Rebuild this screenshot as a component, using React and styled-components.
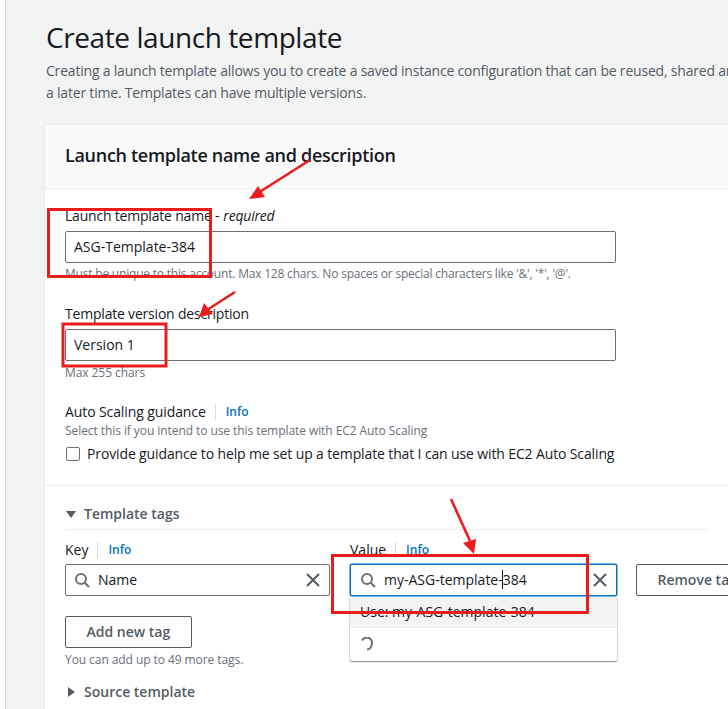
import styled, { createGlobalStyle } from "styled-components";

const GlobalStyle = createGlobalStyle`
  html, body {
    margin: 0;
    padding: 0;
    background: #fff;
    overflow: hidden;
  }
  body {
    font-family: "Open Sans", "Noto Sans", sans-serif;
    color: #16191f;
  }
`;

const Page = styled.div`
  position: relative;
  width: 728px;
  height: 709px;
  overflow: hidden;
  display: flex;
`;

const SideEdge = styled.div`
  flex: 0 0 5px;
  background: #fff;
  border-right: 1px solid #d5dbdb;
`;

const Main = styled.div`
  flex: 0 0 722px;
  background: #f2f3f3;
  padding: 0 0 0 38px;
  box-sizing: border-box;
  overflow: hidden;
`;

const Title = styled.h1`
  margin: 17px 0 0 2px;
  font-size: 28px;
  line-height: 40px;
  font-weight: 400;
  letter-spacing: -0.42px;
`;

const Desc = styled.p`
  margin: 3px 0 20px 2px;
  font-size: 14px;
  line-height: 22px;
  color: #545b64;
  white-space: nowrap;
  letter-spacing: -0.2px;
`;

const Panel = styled.div`
  background: #fff;
  border: 1px solid #eaeded;
  border-right: none;
  height: 640px;
`;

const PanelHead = styled.div`
  height: 64px;
  box-sizing: border-box;
  padding: 18px 20px 0;
  background: #fafafa;
  border-bottom: 1px solid #eaeded;
`;

const PanelTitle = styled.h2`
  margin: 0;
  font-size: 18px;
  line-height: 24px;
  font-weight: 600;
  letter-spacing: -0.3px;
`;

const Body = styled.div`
  padding: 17px 20px 0;
`;

const Field = styled.div`
  width: 551px;
  margin-bottom: ${(p) => p.$gap || 0}px;
`;

const Label = styled.div`
  font-size: 14px;
  line-height: 20px;
  margin-bottom: ${(p) => p.$gap ?? 5}px;
  display: flex;
  align-items: center;
  white-space: nowrap;
  letter-spacing: ${(p) => p.$track || 0}px;
  i {
    margin-left: 4px;
  }
`;

const InfoLink = styled.a`
  font-size: 12px;
  font-weight: 600;
  color: #0073bb;
  margin-left: 9px;
  padding-left: 10px;
  border-left: 1px solid #d5dbdb;
  line-height: 16px;
  letter-spacing: 0;
`;

const TextInput = styled.div`
  height: 32px;
  box-sizing: border-box;
  border: 1px solid #687078;
  border-radius: 2px;
  padding: 0 8px;
  font-size: 14px;
  line-height: 30px;
  background: #fff;
`;

const Hint = styled.div`
  font-size: 12px;
  line-height: 16px;
  color: #687078;
  margin-top: ${(p) => p.$top ?? 3}px;
  white-space: nowrap;
  letter-spacing: ${(p) => p.$track ?? -0.07}px;
`;

const CheckRow = styled.div`
  display: flex;
  align-items: center;
  margin-top: 4px;
  font-size: 14px;
  line-height: 22px;
  white-space: nowrap;
  letter-spacing: -0.13px;
`;

const CheckBox = styled.span`
  flex: 0 0 auto;
  width: 12px;
  height: 12px;
  border: 1px solid #687078;
  border-radius: 2px;
  margin: 0 7px 0 1px;
`;

const Divider = styled.div`
  height: 1px;
  background: #eaeded;
  margin: 20px -20px 0;
`;

const Section = styled.div`
  padding: 18px 20px 0;
`;

const SectionHead = styled.div`
  display: flex;
  align-items: center;
  font-size: 14px;
  line-height: 20px;
  font-weight: 600;
  color: #545b64;
  margin-top: ${(p) => p.$top || 0}px;
  svg {
    width: 12px;
    height: 12px;
    margin-right: 7px;
    fill: #545b64;
  }
`;

const SubLine = styled.div`
  height: 1px;
  background: #eaeded;
  margin: 5px 0 10px;
`;

const TagRow = styled.div`
  display: flex;
  align-items: flex-start;
`;

const TagCol = styled.div`
  flex: 0 0 ${(p) => p.$width}px;
  margin-right: ${(p) => p.$gap || 0}px;
`;

const ValueWrap = styled.div`
  position: relative;
`;

const SearchBox = styled.div`
  height: 32px;
  box-sizing: border-box;
  display: flex;
  align-items: center;
  border: 1px solid ${(p) => (p.$focus ? "#0073bb" : "#687078")};
  box-shadow: ${(p) => (p.$focus ? "0 0 0 0.5px #0073bb" : "none")};
  border-radius: 2px;
  padding: 0 8px 1px ${(p) => (p.$focus ? 9 : 8)}px;
  font-size: 14px;
  background: #fff;
  svg {
    flex: 0 0 auto;
  }
`;

const SearchText = styled.span`
  flex: 1;
  margin-left: 8px;
  position: relative;
`;

const Caret = styled.span`
  position: absolute;
  left: 118px;
  top: 0;
  width: 1px;
  height: 19px;
  background: #16191f;
`;

const Menu = styled.div`
  position: absolute;
  left: 0;
  right: 0;
  top: 33px;
  background: #fff;
  box-shadow: 0 1px 1px 0 rgba(0, 28, 36, 0.3), 1px 1px 1px 0 rgba(0, 28, 36, 0.15), -1px 1px 1px 0 rgba(0, 28, 36, 0.15);
  border-radius: 0 0 2px 2px;
`;

const MenuItem = styled.div`
  height: 31px;
  box-sizing: border-box;
  padding-left: 10px;
  font-size: 14px;
  line-height: 30px;
  background: #f2f3f3;
  border-bottom: 1px solid #eaeded;
`;

const MenuLoading = styled.div`
  height: 33px;
  display: flex;
  align-items: center;
  padding-left: 9px;
`;

const Button = styled.div`
  height: 32px;
  box-sizing: border-box;
  border: 1px solid #545b64;
  border-radius: 2px;
  font-size: 14px;
  font-weight: 600;
  color: #545b64;
  line-height: 30px;
  padding: 0 20.5px;
  background: #fff;
  white-space: nowrap;
  display: inline-block;
  margin-top: ${(p) => p.$top || 0}px;
`;

const Annotations = styled.svg`
  position: absolute;
  left: 0;
  top: 0;
  width: 728px;
  height: 709px;
  pointer-events: none;
`;

const SearchIcon = () => (
  <svg width="16" height="16" viewBox="0 0 16 16" fill="none" stroke="#687078" strokeWidth="2">
    <circle cx="7" cy="7" r="5" />
    <path d="M10.7 10.7 15 15" />
  </svg>
);

const ClearIcon = () => (
  <svg width="16" height="16" viewBox="0 0 16 16" fill="none" stroke="#545b64" strokeWidth="2">
    <path d="M2 2l12 12M14 2 2 14" />
  </svg>
);

const Arrow = ({ d, head }) => (
  <>
    <path d={d} fill="none" stroke="#ea1c1c" strokeWidth="2.6" />
    <polygon points={head} fill="#ea1c1c" />
  </>
);

const App = () => {
  return (
    <Page>
      <GlobalStyle />
      <SideEdge />
      <Main>
        <Title>Create launch template</Title>
        <Desc>
          Creating a launch template allows you to create a saved instance configuration that can be reused, shared and launched at
          <br />
          a later time. Templates can have multiple versions.
        </Desc>
        <Panel>
          <PanelHead>
            <PanelTitle>Launch template name and description</PanelTitle>
          </PanelHead>
          <Body>
            <Field $gap={22}>
              <Label $track={-0.2}>
                Launch template name - <i>required</i>
              </Label>
              <TextInput>ASG-Template-384</TextInput>
              <Hint $track={-0.2}>Must be unique to this account. Max 128 chars. No spaces or special characters like '&amp;', '*', '@'.</Hint>
            </Field>
            <Field $gap={21}>
              <Label $track={-0.2}>Template version description</Label>
              <TextInput>Version 1</TextInput>
              <Hint $top={4}>Max 255 chars</Hint>
            </Field>
            <Field>
              <Label $gap={0} $track={-0.1}>
                Auto Scaling guidance
                <InfoLink>Info</InfoLink>
              </Label>
              <Hint $top={1}>Select this if you intend to use this template with EC2 Auto Scaling</Hint>
              <CheckRow>
                <CheckBox />
                Provide guidance to help me set up a template that I can use with EC2 Auto Scaling
              </CheckRow>
            </Field>
            <Divider />
          </Body>
          <Section>
            <SectionHead>
              <svg viewBox="0 0 12 12"><polygon points="1,3 11,3 6,10" /></svg>
              Template tags
            </SectionHead>
            <SubLine />
            <TagRow>
              <TagCol $width={265} $gap={20}>
                <Label $gap={4}>
                  Key
                  <InfoLink>Info</InfoLink>
                </Label>
                <SearchBox>
                  <SearchIcon />
                  <SearchText>Name</SearchText>
                  <ClearIcon />
                </SearchBox>
              </TagCol>
              <TagCol $width={267} $gap={19}>
                <Label $gap={4}>
                  Value
                  <InfoLink>Info</InfoLink>
                </Label>
                <ValueWrap>
                  <SearchBox $focus>
                    <SearchIcon />
                    <SearchText>
                      my-ASG-template-384
                      <Caret />
                    </SearchText>
                    <ClearIcon />
                  </SearchBox>
                  <Menu>
                    <MenuItem>Use: my-ASG-template-384</MenuItem>
                    <MenuLoading>
                      <svg width="16" height="16" viewBox="0 0 16 16" fill="none" stroke="#687078" strokeWidth="2">
                        <path d="M3 3.5A5 5 0 0 1 12.5 8 5 5 0 0 1 8 12.5" />
                      </svg>
                    </MenuLoading>
                  </Menu>
                </ValueWrap>
              </TagCol>
              <TagCol $width={150}>
                <Label $gap={4}>&nbsp;</Label>
                <Button>Remove tag</Button>
              </TagCol>
            </TagRow>
            <Button $top={20}>Add new tag</Button>
            <Hint $top={4}>You can add up to 49 more tags.</Hint>
            <SectionHead $top={14}>
              <svg viewBox="0 0 12 12"><polygon points="3,1 10,6 3,11" /></svg>
              Source template
            </SectionHead>
          </Section>
        </Panel>
      </Main>
      <Annotations viewBox="0 0 728 709">
        <g fill="none" stroke="#ea1c1c" strokeWidth="3">
          <rect x="48.5" y="209.5" width="162" height="67" />
          <rect x="63" y="324" width="103" height="42" />
          <rect x="332.5" y="555.5" width="255" height="57" />
        </g>
        <Arrow d="M310 160 258 193" head="249,199 258,186 265,197" />
        <Arrow d="M235 292 207 310" head="199,317 204,303 213,314" />
        <Arrow d="M451 499 470 541" head="474,554 463,543 476,539" />
      </Annotations>
    </Page>
  );
};

export default App;
